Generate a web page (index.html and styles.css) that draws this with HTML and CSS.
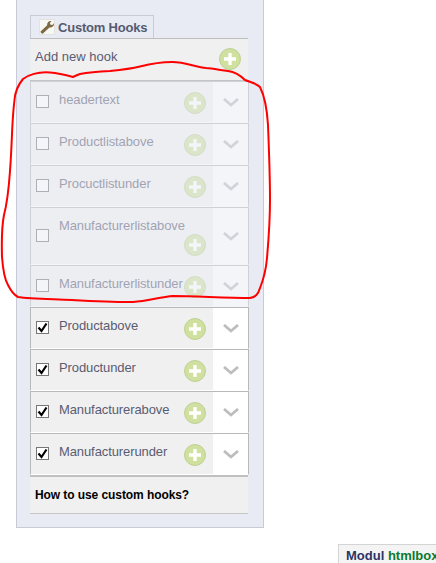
FILE: index.html
```html
<!DOCTYPE html>
<html lang="en">
<head>
<meta charset="utf-8">
<title>Custom Hooks</title>
<link rel="stylesheet" href="styles.css">
</head>
<body>
<svg class="defs" width="0" height="0" aria-hidden="true">
  <symbol id="plus" viewBox="0 0 22 22">
    <circle cx="11" cy="11" r="10.5" fill="#cfe09f" stroke="#bfd095"/>
    <path d="M11 5v12M5 11h12" stroke="#fff" stroke-width="3.4" fill="none"/>
  </symbol>
  <symbol id="chev" viewBox="0 0 16 9">
    <path d="M1 1l7 6 7-6" stroke="#bdbdbd" stroke-width="2.8" fill="none"/>
  </symbol>
  <symbol id="tick" viewBox="0 0 11 11">
    <path d="M1.5 5.5l3 3.5 5-7.500" stroke="#000" stroke-width="2.200" fill="none"/>
  </symbol>
</svg>
<main class="panel">
  <div class="tab">
    <span class="tab-icon">
      <svg width="14" height="14" viewBox="0 0 14 14"><path d="M1 13l-.5-1.500L7.200 5.200C6.800 3 8.500.8 11.500 1L9.800 3.200l.8 1.500 1.700.3L14 3.300c.2 2.800-2 4.700-4.500 4.100L2.700 13.800z" fill="#7d6a45"/></svg>
    </span>
    <span class="tab-title">Custom Hooks</span>
  </div>
  <div class="add-row">
    <span class="add-label">Add new hook</span>
    <svg class="plus" width="22" height="22"><use href="#plus"/></svg>
  </div>
  <div class="rows rows-disabled">
    <div class="row"><div class="row-main"><span class="check"></span><div class="name"><span class="label">headertext</span><svg class="plus" width="22" height="22"><use href="#plus"/></svg></div></div><div class="toggle"><svg width="16" height="9"><use href="#chev"/></svg></div></div>
    <div class="row"><div class="row-main"><span class="check"></span><div class="name"><span class="label">Productlistabove</span><svg class="plus" width="22" height="22"><use href="#plus"/></svg></div></div><div class="toggle"><svg width="16" height="9"><use href="#chev"/></svg></div></div>
    <div class="row"><div class="row-main"><span class="check"></span><div class="name"><span class="label">Procuctlistunder</span><svg class="plus" width="22" height="22"><use href="#plus"/></svg></div></div><div class="toggle"><svg width="16" height="9"><use href="#chev"/></svg></div></div>
    <div class="row"><div class="row-main"><span class="check"></span><div class="name name-wrapped"><span class="label">Manufacturerlistabove</span><svg class="plus" width="22" height="22"><use href="#plus"/></svg></div></div><div class="toggle"><svg width="16" height="9"><use href="#chev"/></svg></div></div>
    <div class="row"><div class="row-main"><span class="check"></span><div class="name"><span class="label">Manufacturerlistunder</span><svg class="plus" width="22" height="22"><use href="#plus"/></svg></div></div><div class="toggle"><svg width="16" height="9"><use href="#chev"/></svg></div></div>
  </div>
  <div class="rows">
    <div class="row"><div class="row-main"><span class="check"><svg width="11" height="11"><use href="#tick"/></svg></span><div class="name"><span class="label">Productabove</span><svg class="plus" width="22" height="22"><use href="#plus"/></svg></div></div><div class="toggle"><svg width="16" height="9"><use href="#chev"/></svg></div></div>
    <div class="row"><div class="row-main"><span class="check"><svg width="11" height="11"><use href="#tick"/></svg></span><div class="name"><span class="label">Productunder</span><svg class="plus" width="22" height="22"><use href="#plus"/></svg></div></div><div class="toggle"><svg width="16" height="9"><use href="#chev"/></svg></div></div>
    <div class="row"><div class="row-main"><span class="check"><svg width="11" height="11"><use href="#tick"/></svg></span><div class="name"><span class="label">Manufacturerabove</span><svg class="plus" width="22" height="22"><use href="#plus"/></svg></div></div><div class="toggle"><svg width="16" height="9"><use href="#chev"/></svg></div></div>
    <div class="row"><div class="row-main"><span class="check"><svg width="11" height="11"><use href="#tick"/></svg></span><div class="name"><span class="label">Manufacturerunder</span><svg class="plus" width="22" height="22"><use href="#plus"/></svg></div></div><div class="toggle"><svg width="16" height="9"><use href="#chev"/></svg></div></div>
  </div>
  <div class="help-row">How to use custom hooks?</div>
</main>
<div class="module-title">Modul <span class="module-name">htmlbox</span></div>
<svg class="scribble" width="436" height="563" viewBox="0 0 436 563" aria-hidden="true">
  <path d="M73 77C66 75 58 73 50 72.500C38 71.500 28 75 23 79C18 85 15 92 14.500 100C13 112 12.500 122 12 134C11.500 146 11 158 10 171C9 185 8 200 4 215C2 225 1.500 240 2 257C3 270 5 280 8 285C11 291 14 295 18 297C30 299 50 299 72 300C95 301 115 302 133 302C148 301 160 297 173 296C195 296 225 298 250 298C255 297 258 295 260 288C264 278 266 270 267 258C269 235 270 220 270 200C270 178 269 150 268 125C267 108 265 97 260 87C256 83 250 82 245 80C240 75 235 72 228 71C220 70 213 68.500 206 68C196 67 185 62 172 62C160 62 150 64 140 66.500C130 69 120 70 110 71C100 71.500 88 72.500 80 74C77 75 75 76 73 77Z" fill="none" stroke="#f00" stroke-width="2"/>
</svg>
</body>
</html>
```
FILE: styles.css
```css
* {
  box-sizing: border-box;
}

html,
body {
  margin: 0;
  height: 563px;
  overflow: hidden;
  background: #fff;
}

body {
  position: relative;
  font-family: "Liberation Sans", Arial, sans-serif;
  font-size: 12px;
  color: #5a5c72;
}

.defs {
  position: absolute;
}

.panel {
  width: 248px;
  height: 528px;
  margin-left: 16px;
  padding: 15px 15px 0 13px;
  background: #e8ebf4;
  border: 1px solid #c8cbd5;
  border-top: 0;
}

.tab {
  display: flex;
  align-items: center;
  gap: 3px;
  width: 124px;
  height: 23px;
  padding-left: 8px;
  border: 1px solid #c8cbd5;
  border-bottom: 0;
}

.tab-icon {
  display: flex;
  align-items: center;
  justify-content: center;
  width: 16px;
  height: 16px;
  background: #f7f7f4;
  border: 1px solid #e2e2de;
}

.tab-title {
  font-size: 13px;
  font-weight: 700;
  letter-spacing: -0.2px;
  color: #565a70;
}

.add-row {
  display: flex;
  justify-content: space-between;
  width: 218px;
  height: 43px;
  padding: 10px 6px 0 5px;
  background: #f0f0f0;
  border-top: 1px solid #bdbdc2;
  border-bottom: 1px solid #c4c4c4;
}

.add-label {
  font-size: 13px;
  line-height: 16px;
}

.plus {
  display: block;
  flex: none;
}

.add-row .plus {
  margin: -1px 1px 0 0;
}

.rows {
  width: 219px;
}

.rows-disabled {
  opacity: 0.5;
}

.rows-disabled .row-main {
  background: #f3f1f2;
}

.row {
  display: flex;
  background: #fff;
  border: 1px solid #b9b9b9;
  border-bottom: 1px solid #fff;
}

.row-main {
  display: flex;
  align-items: center;
  gap: 10px;
  width: 182px;
  padding-left: 5px;
  background: #f0f0f0;
}

.check {
  display: flex;
  align-items: center;
  justify-content: center;
  flex: none;
  width: 13px;
  height: 13px;
  margin-top: -1px;
  background: #fff;
  border: 1px solid #777;
}

.name {
  display: flex;
  justify-content: space-between;
  align-self: flex-start;
  width: 147px;
  padding: 10px 0 8px;
}

.name-wrapped {
  flex-wrap: wrap;
}

.label {
  flex: none;
  font-size: 13px;
  line-height: 16px;
  letter-spacing: -0.1px;
}

.name-wrapped .label {
  width: 100%;
}

.name-wrapped .plus {
  margin-left: auto;
}

.toggle {
  display: flex;
  align-items: center;
  justify-content: center;
  width: 35px;
}

.help-row {
  width: 218px;
  height: 39px;
  padding: 11px 0 0 5px;
  background: #f0f0f0;
  border-top: 2px solid #c0c0c0;
  border-bottom: 1px solid #c8c8c8;
  font-weight: 700;
  letter-spacing: -0.08px;
  color: #000;
}

.module-title {
  width: 110px;
  height: 30px;
  margin: 16px 0 0 338px;
  padding: 3px 0 0 7px;
  border: 1px solid #d4d4d4;
  background: #f4f4f4;
  font-size: 13px;
  font-weight: 700;
  white-space: nowrap;
  color: #2d3566;
}

.module-name {
  color: #0b7a2c;
}

.scribble {
  position: absolute;
  top: 0;
  left: 0;
  pointer-events: none;
}
```
